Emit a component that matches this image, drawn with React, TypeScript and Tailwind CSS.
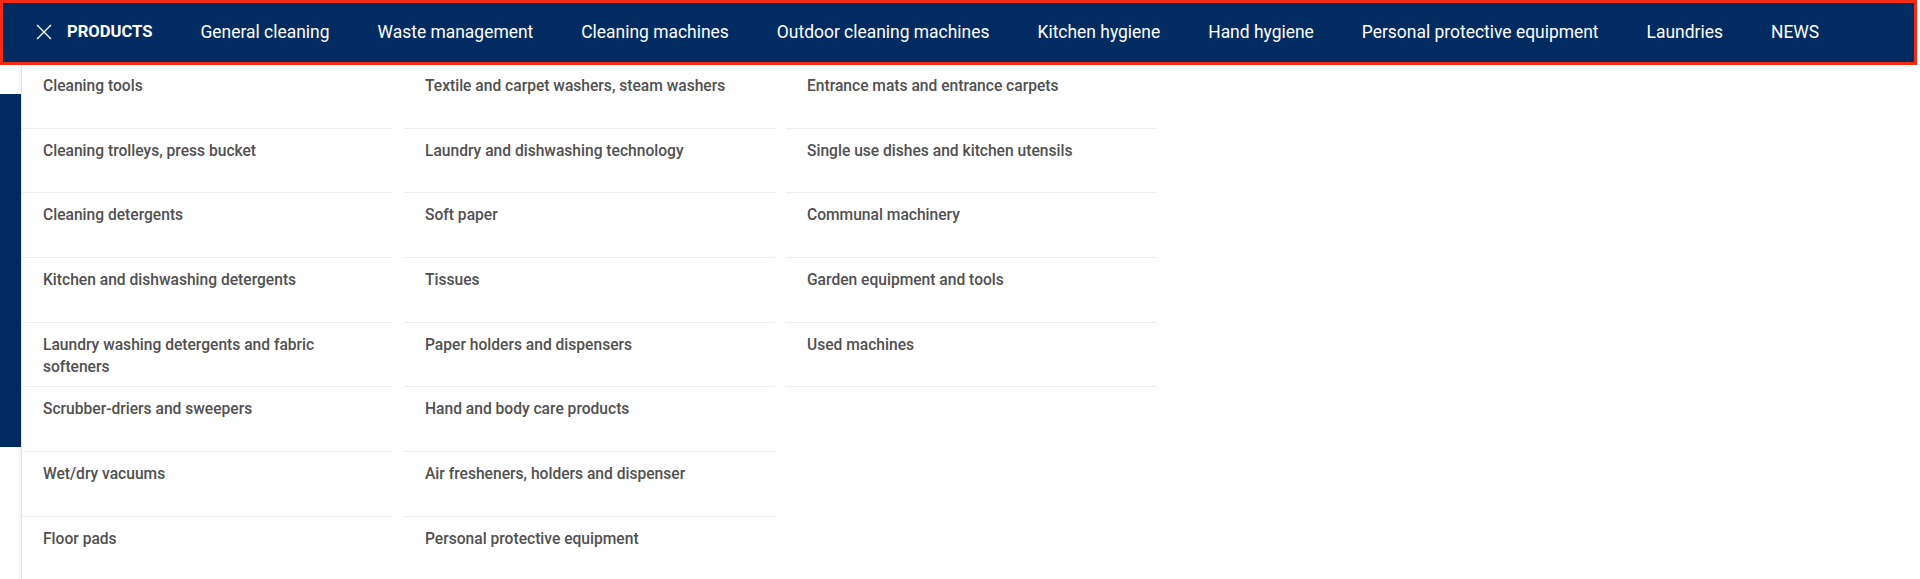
const navItems = [
  "General cleaning",
  "Waste management",
  "Cleaning machines",
  "Outdoor cleaning machines",
  "Kitchen hygiene",
  "Hand hygiene",
  "Personal protective equipment",
  "Laundries",
  "NEWS",
];

const columns = [
  [
    "Cleaning tools",
    "Cleaning trolleys, press bucket",
    "Cleaning detergents",
    "Kitchen and dishwashing detergents",
    "Laundry washing detergents and fabric softeners",
    "Scrubber-driers and sweepers",
    "Wet/dry vacuums",
    "Floor pads",
  ],
  [
    "Textile and carpet washers, steam washers",
    "Laundry and dishwashing technology",
    "Soft paper",
    "Tissues",
    "Paper holders and dispensers",
    "Hand and body care products",
    "Air fresheners, holders and dispenser",
    "Personal protective equipment",
  ],
  [
    "Entrance mats and entrance carpets",
    "Single use dishes and kitchen utensils",
    "Communal machinery",
    "Garden equipment and tools",
    "Used machines",
  ],
];

function CloseIcon() {
  return (
    <svg width="16" height="16" viewBox="0 0 16 16" fill="none" aria-hidden="true">
      <path d="M1 1L15 15M15 1L1 15" stroke="white" strokeWidth="1.4" />
    </svg>
  );
}

export default function App() {
  return (
    <div
      className="relative h-[579px] w-[1920px] overflow-hidden bg-white"
      style={{ fontFamily: "Roboto, 'Liberation Sans', sans-serif" }}
    >
      <nav className="relative z-20 flex h-[65px] w-[1917px] items-center gap-[48px] border-[3px] border-[#f52b14] bg-[#022c61] pl-[33px] text-[17.45px] text-white">
        <button type="button" className="flex items-center gap-[15px]">
          <CloseIcon />
          <span className="text-[16.6px] font-bold">PRODUCTS</span>
        </button>
        {navItems.map((item) => (
          <a key={item} href="#" className="whitespace-nowrap">
            {item}
          </a>
        ))}
      </nav>

      {/* page behind the dropdown */}
      <div className="mt-[29px] h-[353px] w-[21px] bg-[#022c61]" />

      <div className="absolute left-[21px] top-[64px] z-10 flex h-[600px] w-[1160px] gap-[11px] border-l border-[#e2e2e2] bg-white shadow-[-2px_0_4px_rgba(0,0,0,0.06)]">
        {columns.map((col, i) => (
          <ul key={i} className="flex w-[371px] flex-col">
            {col.map((label) => (
              <li
                key={label}
                className="h-[64.67px] border-b border-[#efefef] pl-[21px] pr-[30px] pt-[11px] text-[15.6px] font-medium leading-[22px] text-[#505050]"
              >
                <a href="#">{label}</a>
              </li>
            ))}
          </ul>
        ))}
      </div>
    </div>
  );
}
